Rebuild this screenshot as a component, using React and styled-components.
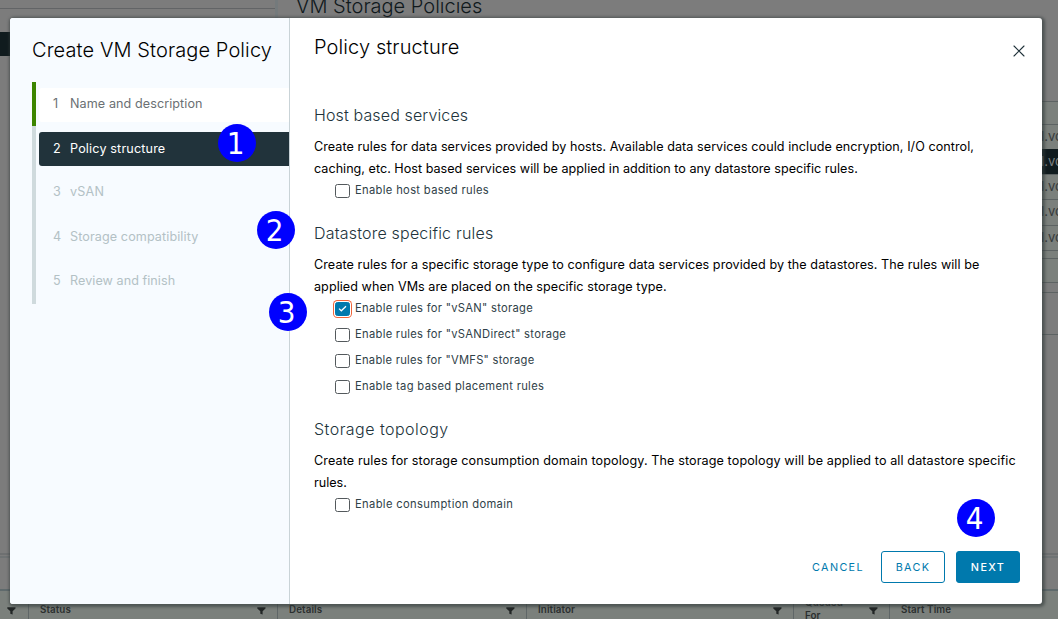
import React from "react";
import styled, { createGlobalStyle } from "styled-components";

const Global = createGlobalStyle`
  * { box-sizing: border-box; }
  html, body { margin: 0; overflow: hidden; }
  body { font-family: Inter, "Liberation Sans", sans-serif; background: #7c7c7c; }
  h1, h2, h3, p, ol { margin: 0; padding: 0; }
  button { font-family: inherit; margin: 0; padding: 0; }
`;

const Screen = styled.div`
  position: relative;
  width: 1058px;
  height: 619px;
  overflow: hidden;
`;

/* ---- dimmed page behind the dialog ---- */
const Page = styled.div`
  display: flex;
  flex-direction: column;
  height: 100%;
  background: #7c7c7c;
`;
const Workspace = styled.div`
  display: flex;
  flex: none;
  height: 553px;
`;
const Sidebar = styled.div`
  width: 278px;
  border-right: 3px solid #747a7c;
  flex: none;
`;
const SidebarHead = styled.div`
  height: 9px;
  border-bottom: 1px solid #626466;
`;
const SidebarActive = styled.div`
  margin-top: 23px;
  height: 24px;
  background: #101b1e;
`;
const Content = styled.div`
  flex: 1;
`;
const PageTitle = styled.h1`
  height: 101px;
  padding-left: 18px;
  margin-top: -6px;
  margin-bottom: 6px;
  font-size: 20px;
  font-weight: 300;
  line-height: 24px;
  color: #10191c;
`;
const GridRow = styled.div`
  height: ${(p) => p.$h}px;
  padding-left: 763px;
  border-top: 1px solid ${(p) => (p.$dark ? "#101b1e" : "#5d6363")};
  background: ${(p) => (p.$dark ? "#101b1e" : p.$plain ? "#7c7c7c" : "#7b807c")};
  color: ${(p) => (p.$dark ? "#7c8080" : "#363b3b")};
  font-size: 13px;
  line-height: 23px;
  white-space: nowrap;
`;
const Tasks = styled.div`
  flex: none;
  height: 38px;
  border-top: 2px solid #6e7071;
  border-bottom: 2px solid #5f6a6c;
  &::before {
    content: "";
    display: block;
    margin-top: 1px;
    height: 2px;
    background: #6f7374;
  }
`;
const TaskHeader = styled.div`
  display: flex;
  flex: none;
  height: 28px;
  background: #7b807c;
`;
const TaskCell = styled.div`
  display: flex;
  justify-content: space-between;
  flex: none;
  width: ${(p) => p.$w}px;
  padding: ${(p) => (p.$two ? 5 : 12)}px ${(p) => p.$pr ?? 11}px 0 ${(p) => p.$pl ?? 11}px;
  border-right: 1px solid #5f6667;
  font-size: 9.8px;
  font-weight: 600;
  line-height: 13px;
  letter-spacing: 0.1px;
  color: #2b2f2f;
  & > svg { margin-top: ${(p) => (p.$two ? 11 : 4)}px; flex: none; }
`;

/* ---- dialog ---- */
const Dialog = styled.div`
  position: absolute;
  left: 10px;
  top: 18px;
  width: 1032px;
  height: 586px;
  display: flex;
  background: #fff;
  border-radius: 3px;
  box-shadow: 1px 1px 3px 2px rgba(50, 58, 58, 0.6);
  overflow: hidden;
`;
const StepPane = styled.div`
  width: 280px;
  flex: none;
  background: #f7fbff;
  border-right: 1px solid #c9d3d7;
  padding: 20px 0 0 22px;
`;
const Title = styled.h2`
  font-size: 20px;
  line-height: 24px;
  font-weight: 300;
  letter-spacing: 0.1px;
  white-space: nowrap;
  color: #000;
`;
const Steps = styled.ol`
  list-style: none;
  margin-top: 20px;
`;
const Step = styled.li`
  height: ${(p) => (p.$state === "todo" ? 44.6 : 44)}px;
  padding: ${(p) => ({ done: 6, current: 6, todo: 5 })[p.$state]}px 0 0 3px;
  border-left: 4px solid ${(p) => (p.$state === "done" ? "#3c8500" : "#cfdadd")};
`;
const StepButton = styled.div`
  display: flex;
  align-items: center;
  height: 34px;
  padding-bottom: ${(p) => (p.$state === "current" ? 2 : p.$state === "done" ? 3 : 1)}px;
  border-radius: 3px 0 0 3px;
  font-size: 12.6px;
  letter-spacing: ${(p) => p.$ls}px;
  background: ${(p) => ({ done: "#fff", current: "#21333b", todo: "transparent" })[p.$state]};
  color: ${(p) => ({ done: "#6b7073", current: "#fff", todo: "#b3c1c5" })[p.$state]};
`;
const StepNumber = styled.span`
  width: 31px;
  padding-left: 14px;
`;

const Main = styled.div`
  flex: 1;
  display: flex;
  flex-direction: column;
  padding: 17px 22px 21px 24px;
`;
const MainHead = styled.div`
  display: flex;
  flex: none;
  justify-content: space-between;
  height: 68px;
`;
const Close = styled.button`
  display: block;
  width: 12px;
  height: 12px;
  margin: 10px -5px 0 0;
  border: 0;
  background: none;
  svg { display: block; }
`;
const Section = styled.section`
  margin-bottom: 17.5px;
`;
const Heading = styled.h3`
  font-size: 16px;
  line-height: 24px;
  font-weight: 300;
  letter-spacing: ${(p) => p.$ls}px;
  color: #21333b;
  margin-bottom: ${(p) => p.$gap}px;
`;
const Line = styled.span`
  display: block;
  letter-spacing: ${(p) => p.$ls}px;
`;
const Text = styled.p`
  font-size: 12.6px;
  line-height: 21.7px;
  white-space: nowrap;
  color: #000;
`;
const Options = styled.div`
  margin: -2.4px 0 0 21px;
`;
const Option = styled.label`
  display: flex;
  align-items: center;
  height: 26px;
  gap: 5px;
  font-size: 11.2px;
  letter-spacing: ${(p) => p.$ls}px;
  color: #2f4148;
`;
const Box = styled.span`
  display: flex;
  align-items: center;
  justify-content: center;
  width: 15px;
  height: 14px;
  margin-top: 1px;
  border-radius: 2.5px;
  border: 1px solid ${(p) => (p.$on ? "#0079ad" : "#53595c")};
  background: ${(p) => (p.$on ? "#0079ad" : "#fff")};
  box-shadow: ${(p) => (p.$on ? "0 0 0 1px #fff, 0 0 0 2px #f0653a" : "none")};
`;
const Footer = styled.div`
  display: flex;
  justify-content: flex-end;
  margin-top: auto;
  gap: 11px;
`;
const Button = styled.button`
  width: ${(p) => p.$w || 64}px;
  height: 32px;
  border-radius: 3px;
  font-size: 10.8px;
  font-weight: ${(p) => (p.$kind === "primary" ? 500 : 400)};
  letter-spacing: 1.35px;
  border: 1px solid ${(p) => (p.$kind === "link" ? "transparent" : "#0079ad")};
  background: ${(p) => (p.$kind === "primary" ? "#0079ad" : "transparent")};
  color: ${(p) => (p.$kind === "primary" ? "#fff" : "#0079ad")};
`;

/* numbered callouts laid over the dialog */
const Callout = styled.div`
  position: absolute;
  left: ${(p) => p.$x}px;
  top: ${(p) => p.$y}px;
  width: 38px;
  height: 38px;
  border-radius: 50%;
  background: #0000ff;
  color: #fff;
  font: 31px/39px "DejaVu Sans Condensed", "DejaVu Sans", sans-serif;
  font-stretch: condensed;
  text-align: center;
  padding-right: 3px;
`;

const Funnel = () => (
  <svg width="9" height="8" viewBox="0 0 9 8">
    <path d="M0.3 0.3h8.2v1.1L5.6 4.2V7.6L3.3 6.7V4.2L0.3 1.4z" fill="#222626" />
  </svg>
);

const steps = [
  ["Name and description", "done", 0.08],
  ["Policy structure", "current", 0.16],
  ["vSAN", "todo", 0.2],
  ["Storage compatibility", "todo", 0.1],
  ["Review and finish", "todo", 0.06],
];

const sections = [
  {
    title: "Host based services",
    ls: 0.13,
    gap: 9,
    lines: [
      ["Create rules for data services provided by hosts. Available data services could include encryption, I/O control,", 0.058],
      ["caching, etc. Host based services will be applied in addition to any datastore specific rules.", 0.016],
    ],
    options: [["Enable host based rules", false, 0.33]],
  },
  {
    title: "Datastore specific rules",
    ls: 0.2,
    gap: 9.7,
    lines: [
      ["Create rules for a specific storage type to configure data services provided by the datastores. The rules will be", 0.062],
      ["applied when VMs are placed on the specific storage type.", 0.05],
    ],
    options: [
      ['Enable rules for "vSAN" storage', true, 0.29],
      ['Enable rules for "vSANDirect" storage', false, 0.29],
      ['Enable rules for "VMFS" storage', false, 0.27],
      ["Enable tag based placement rules", false, 0.32],
    ],
  },
  {
    title: "Storage topology",
    ls: 0.47,
    gap: 9.6,
    lines: [
      ["Create rules for storage consumption domain topology. The storage topology will be applied to all datastore specific", 0.105],
      ["rules.", 0],
    ],
    options: [["Enable consumption domain", false, 0.35]],
  },
];

const callouts = [
  [218, 124],
  [257, 211],
  [269, 293],
  [957, 499],
];

export default function App() {
  return (
    <Screen>
      <Global />
      <Page>
        <Workspace>
          <Sidebar>
            <SidebarHead />
            <SidebarActive />
          </Sidebar>
          <Content>
            <PageTitle>VM Storage Policies</PageTitle>
            <GridRow $h={23} />
            <GridRow $h={25}>l.vc</GridRow>
            <GridRow $h={25} $dark>l.vc</GridRow>
            <GridRow $h={25}>l.vc</GridRow>
            <GridRow $h={26}>l.vc</GridRow>
            <GridRow $h={25}>l.vc</GridRow>
            <GridRow $h={8} />
            <GridRow $h={24} />
            <GridRow $h={10} $plain />
            <GridRow $h={42} $plain />
            <GridRow $h={2} $plain />
          </Content>
        </Workspace>
        <Tasks />
        <TaskHeader>
          <TaskCell $w={29} $pl={0} $pr={12}>
            <span />
            <Funnel />
          </TaskCell>
          <TaskCell $w={249}>
            Status <Funnel />
          </TaskCell>
          <TaskCell $w={249}>
            Details <Funnel />
          </TaskCell>
          <TaskCell $w={267}>
            Initiator <Funnel />
          </TaskCell>
          <TaskCell $w={96} $two>
            <span>
              Queued
              <br />
              For
            </span>
            <Funnel />
          </TaskCell>
          <TaskCell $w={260}>Start Time</TaskCell>
        </TaskHeader>
      </Page>

      <Dialog>
        <StepPane>
          <Title>Create VM Storage Policy</Title>
          <Steps>
            {steps.map(([label, state, ls], i) => (
              <Step key={label} $state={state}>
                <StepButton $state={state} $ls={ls}>
                  <StepNumber>{i + 1}</StepNumber>
                  {label}
                </StepButton>
              </Step>
            ))}
          </Steps>
        </StepPane>
        <Main>
          <MainHead>
            <Title>Policy structure</Title>
            <Close aria-label="Close">
              <svg width="12" height="12" viewBox="0 0 12 12">
                <path d="M1 1l10 10M11 1L1 11" stroke="#21333b" strokeWidth="1.1" strokeLinecap="round" />
              </svg>
            </Close>
          </MainHead>
          {sections.map((s) => (
            <Section key={s.title}>
              <Heading $ls={s.ls} $gap={s.gap}>{s.title}</Heading>
              <Text>
                {s.lines.map(([t, ls]) => (
                  <Line key={t} $ls={ls}>{t}</Line>
                ))}
              </Text>
              <Options>
                {s.options.map(([t, on, ls]) => (
                  <Option key={t} $ls={ls}>
                    <Box $on={on}>
                      {on && (
                        <svg width="9" height="7" viewBox="0 0 9 7">
                          <path d="M1 3.6l2.3 2.2L8 1.2" fill="none" stroke="#fff" strokeWidth="1.2" />
                        </svg>
                      )}
                    </Box>
                    {t}
                  </Option>
                ))}
              </Options>
            </Section>
          ))}
          <Footer>
            <Button $kind="link" $w={64}>CANCEL</Button>
            <Button>BACK</Button>
            <Button $kind="primary">NEXT</Button>
          </Footer>
        </Main>
      </Dialog>

      {callouts.map(([x, y], i) => (
        <Callout key={i} $x={x} $y={y}>{i + 1}</Callout>
      ))}
    </Screen>
  );
}
